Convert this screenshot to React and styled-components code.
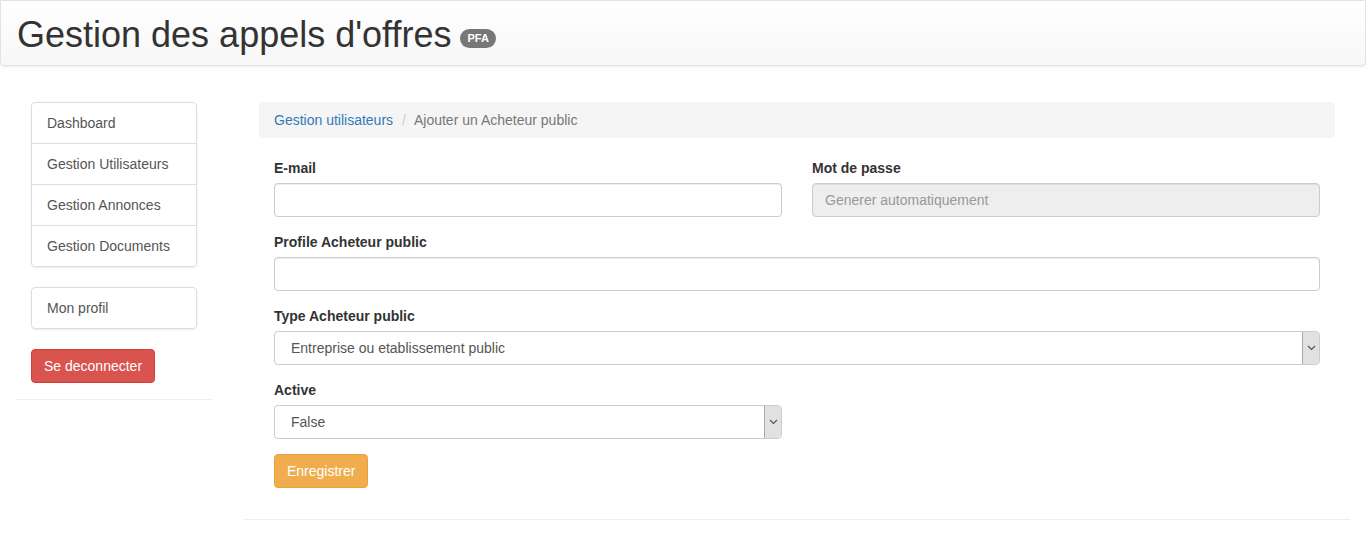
import React from "react";
import styled, { createGlobalStyle } from "styled-components";

const GlobalStyle = createGlobalStyle`
  * { box-sizing: border-box; }
  body {
    margin: 0;
    background: #fff;
    color: #333;
    font-family: "Liberation Sans", Arial, sans-serif;
    font-size: 14px;
    line-height: 1.42857;
  }
`;

const Header = styled.div`
  height: 66px;
  border: 1px solid #e3e3e3;
  border-radius: 0 0 4px 4px;
  background: linear-gradient(to bottom, #ffffff 0%, #f7f7f7 100%);
  box-shadow: 0 1px 3px rgba(0, 0, 0, 0.08);
  padding: 0 16px;
  display: flex;
  align-items: center;
`;

const Title = styled.h1`
  margin: 0;
  font-size: 36px;
  font-weight: 400;
  line-height: 1.1;
  color: #333;
  display: flex;
  align-items: center;
  gap: 9px;
  padding-top: 4px;
`;

const Badge = styled.span`
  display: inline-block;
  background: #777;
  color: #fff;
  font-size: 11px;
  font-weight: 700;
  line-height: 1;
  padding: 4px 7px;
  border-radius: 10px;
  margin-top: 6px;
`;

const Layout = styled.div`
  display: flex;
  padding-top: 36px;
`;

const Sidebar = styled.div`
  width: 228px;
  padding: 0 16px;
  flex-shrink: 0;
`;

const SideInner = styled.div`
  padding: 0 15px 16px;
  border-bottom: 1px solid #eee;
`;

const ListGroup = styled.div`
  border-radius: 4px;
  box-shadow: 0 1px 2px rgba(0, 0, 0, 0.08);
  margin-bottom: 20px;
`;

const ListItem = styled.a`
  display: block;
  padding: 11px 15px 9px;
  border: 1px solid #ddd;
  margin-bottom: -1px;
  color: #555;
  text-decoration: none;
  background: #fff;
  &:first-child { border-radius: 4px 4px 0 0; }
  &:last-child { border-radius: 0 0 4px 4px; margin-bottom: 0; }
  &:only-child { border-radius: 4px; }
`;

const Button = styled.button`
  display: inline-block;
  font-family: inherit;
  font-size: 14px;
  line-height: 20px;
  padding: 6px 12px;
  border-radius: 4px;
  color: #fff;
  border: 1px solid ${(p) => (p.$variant === "danger" ? "#d43f3a" : "#eea236")};
  background: ${(p) => (p.$variant === "danger" ? "#d9534f" : "#f0ad4e")};
`;

const Main = styled.div`
  flex: 1;
  padding: 0 16px;
`;

const MainInner = styled.div`
  padding: 0 15px 31px;
  border-bottom: 1px solid #eee;
`;

const Breadcrumb = styled.ol`
  list-style: none;
  margin: 0 0 20px;
  padding: 9px 15px 7px;
  background: #f5f5f5;
  border-radius: 4px;
  display: flex;
`;

const Crumb = styled.li`
  color: ${(p) => (p.$active ? "#777" : "#337ab7")};
`;

const Divider = styled.li`
  color: #ccc;
  padding: 0 8px 0 9px;
`;

const Form = styled.form`
  padding: 0 15px;
`;

const Row = styled.div`
  display: grid;
  grid-template-columns: ${(p) => p.$cols || "1fr"};
  column-gap: 30px;
`;

const Group = styled.div`
  margin-bottom: 15px;
`;

const Label = styled.label`
  display: block;
  font-weight: 700;
  padding-top: 1px;
  margin-bottom: 4px;
`;

const Input = styled.input`
  display: block;
  width: 100%;
  height: 34px;
  padding: 6px 12px;
  font-family: inherit;
  font-size: 14px;
  color: #555;
  background: ${(p) => (p.disabled ? "#eee" : "#fff")};
  border: 1px solid #ccc;
  border-radius: 4px;
  box-shadow: inset 0 1px 1px rgba(0, 0, 0, 0.075);
  &::placeholder { color: #999; }
`;

const SelectWrap = styled.div`
  position: relative;
  width: 100%;
`;

const Select = styled.select`
  display: block;
  width: 100%;
  height: 34px;
  padding: 6px 12px 6px 16px;
  font-family: inherit;
  font-size: 14px;
  color: #555;
  background: #fff;
  border: 1px solid #ccc;
  border-radius: 4px;
  appearance: none;
  -webkit-appearance: none;
`;

const Arrow = styled.span`
  position: absolute;
  right: 1px;
  top: 1px;
  bottom: 1px;
  width: 17px;
  background: #e1e1e1;
  border-left: 1px solid #a9a9a9;
  border-radius: 0 3px 3px 0;
  display: flex;
  align-items: center;
  justify-content: center;
  pointer-events: none;
`;

const Chevron = () => (
  <svg width="9" height="6" viewBox="0 0 9 6">
    <path d="M1 1 L4.5 4.5 L8 1" fill="none" stroke="#555" strokeWidth="1.2" />
  </svg>
);

export default function App() {
  return (
    <>
      <GlobalStyle />
      <Header>
        <Title>
          Gestion des appels d'offres <Badge>PFA</Badge>
        </Title>
      </Header>
      <Layout>
        <Sidebar>
          <SideInner>
            <ListGroup>
              <ListItem>Dashboard</ListItem>
              <ListItem>Gestion Utilisateurs</ListItem>
              <ListItem>Gestion Annonces</ListItem>
              <ListItem>Gestion Documents</ListItem>
            </ListGroup>
            <ListGroup>
              <ListItem>Mon profil</ListItem>
            </ListGroup>
            <Button $variant="danger">Se deconnecter</Button>
          </SideInner>
        </Sidebar>
        <Main>
          <MainInner>
            <Breadcrumb>
              <Crumb>Gestion utilisateurs</Crumb>
              <Divider>/</Divider>
              <Crumb $active>Ajouter un Acheteur public</Crumb>
            </Breadcrumb>
            <Form onSubmit={(e) => e.preventDefault()}>
              <Row $cols="1fr 1fr">
                <Group>
                  <Label>E-mail</Label>
                  <Input type="text" />
                </Group>
                <Group>
                  <Label>Mot de passe</Label>
                  <Input type="text" disabled placeholder="Generer automatiquement" />
                </Group>
              </Row>
              <Group>
                <Label>Profile Acheteur public</Label>
                <Input type="text" />
              </Group>
              <Group>
                <Label>Type Acheteur public</Label>
                <SelectWrap>
                  <Select defaultValue="1">
                    <option value="1">Entreprise ou etablissement public</option>
                  </Select>
                  <Arrow><Chevron /></Arrow>
                </SelectWrap>
              </Group>
              <Row $cols="1fr 1fr">
                <Group>
                  <Label>Active</Label>
                  <SelectWrap>
                    <Select defaultValue="false">
                      <option value="false">False</option>
                      <option value="true">True</option>
                    </Select>
                    <Arrow><Chevron /></Arrow>
                  </SelectWrap>
                </Group>
              </Row>
              <Button $variant="warning" type="submit">Enregistrer</Button>
            </Form>
          </MainInner>
        </Main>
      </Layout>
    </>
  );
}
